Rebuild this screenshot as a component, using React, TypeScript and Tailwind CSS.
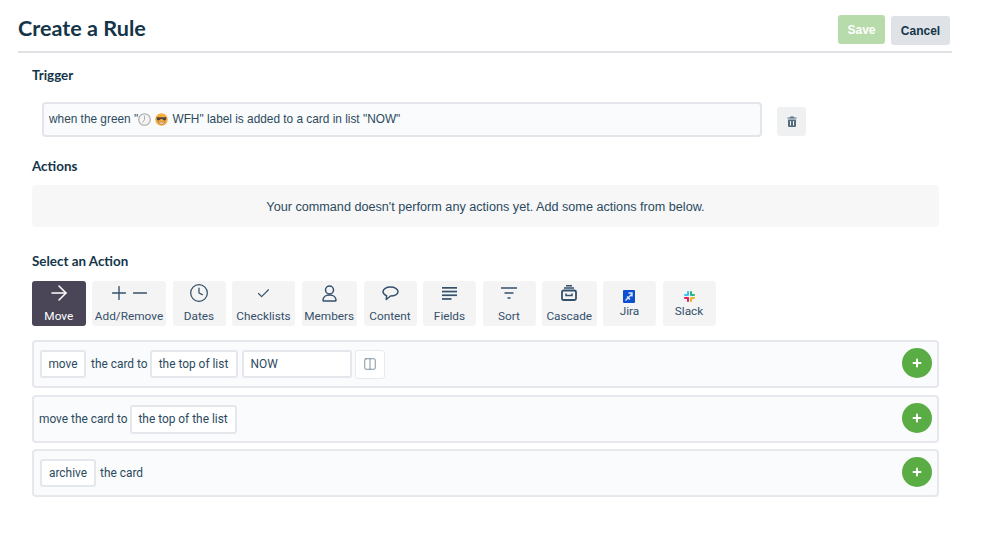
import React from "react";
import { ArrowRight, Plus, Minus, Clock, Check, Columns2 } from "lucide-react";

const ink = "#34506a";

function ClockEmoji() {
  return (
    <svg width="13" height="13" viewBox="0 0 28 28" className="inline-block align-[-2.500px]">
      <circle cx="14" cy="14" r="12.500" fill="#f4f4f4" stroke="#a8a8a8" strokeWidth="2.400" />
      <path d="M14 6.500V14l-3.500 6" fill="none" stroke="#8a8a8a" strokeWidth="1.400" strokeLinecap="round" />
    </svg>
  );
}

function CoolEmoji() {
  return (
    <svg width="13" height="13" viewBox="0 0 26 26" className="inline-block align-[-2px] ml-[4px] mr-[1px]">
      <circle cx="13" cy="13" r="12.500" fill="#f8ad3f" />
      <path d="M3 8.500h20l-.8 4.500c-.4 2-3.600 2.400-5.400 1.200-1.400-.9-2-2-3.800-2s-2.400 1.100-3.800 2c-1.800 1.200-5 .8-5.400-1.200z" fill="#4c4640" />
      <path d="M6.500 17.500c3.500 1.200 9.500 1.200 13 0-.8 3-3.400 4.800-6.500 4.800s-5.700-1.800-6.500-4.800z" fill="#fff4dc" stroke="#7a3b17" strokeWidth="1" />
    </svg>
  );
}

function TabButton({ label, width, active, children, tight }: { label: string; width: string; active?: boolean; children: React.ReactNode; tight?: boolean }) {
  return (
    <div className={`${width} h-[45px] rounded-[3px] flex flex-col items-center font-['Roboto',sans-serif] ${active ? "bg-[#4a4658] text-white" : "bg-[#f4f4f5] text-[#34506a]"} ${tight ? "pt-[5px]" : "pt-[2px]"}`}>
      <div className="h-[20px] flex items-center justify-center">{children}</div>
      <div className={`text-[11.800px] leading-[16px] whitespace-nowrap ${tight ? "-mt-[3px]" : "mt-[5px]"}`}>{label}</div>
    </div>
  );
}

function Pill({ children, className = "" }: { children: React.ReactNode; className?: string }) {
  return (
    <span className={`inline-flex items-center h-[28px] px-[7px] pt-[1px] bg-white border-2 border-[#e4e7ec] rounded-[3px] whitespace-nowrap ${className}`}>
      {children}
    </span>
  );
}

function AddButton() {
  return (
    <div className="w-[30px] h-[30px] -mt-[3px] rounded-full bg-[#5aac44] flex items-center justify-center">
      <Plus size={12} strokeWidth={4} color="#ffffff" />
    </div>
  );
}

function Row({ children }: { children: React.ReactNode }) {
  return (
    <div className="h-[48px] w-full bg-[#fafbfc] border-2 border-[#e6e8ee] rounded-[4px] flex items-center justify-between pl-[6px] pr-[5px] text-[11.900px] text-[#2c4a5e] font-['Roboto',sans-serif]">
      <div className="flex items-center">{children}</div>
      <AddButton />
    </div>
  );
}

export default function App() {
  return (
    <div className="w-[999px] h-[540px] bg-white overflow-hidden font-['Liberation_Sans',sans-serif]">
      <header className="ml-[18px] w-[934px] h-[53px] border-b-2 border-[#dfe1e4] flex justify-between pr-[2px]">
        <h1 className="mt-[14px] text-[21.600px] leading-[28px] font-bold text-[#143549] font-['Lato',sans-serif]">Create a Rule</h1>
        <div className="flex gap-[6px] items-start mt-[15px]">
          <button className="w-[47px] h-[29px] rounded-[3px] bg-[#b7dbab] text-white text-[12px] font-bold">Save</button>
          <button className="w-[59px] h-[29px] mt-[1px] rounded-[3px] bg-[#dfe3e8] text-[#143549] text-[12px] font-bold">Cancel</button>
        </div>
      </header>

      <main className="pl-[32px] w-[939px]">
        <h2 className="mt-[14px] text-[13.400px] leading-[17px] font-bold text-[#143549] font-['Lato',sans-serif]">Trigger</h2>
        <div className="mt-[18px] ml-[10px] flex items-center">
          <div className="w-[720px] h-[35px] bg-[#fafbfc] border-2 border-[#e3e5ea] rounded-[4px] flex items-center pl-[5px] text-[11.850px] text-[#2c4a5e] whitespace-pre">
            when the green "<ClockEmoji /><CoolEmoji /> WFH" label is added to a card in list "NOW"
          </div>
          <div className="ml-[15px] mt-[4px] w-[29px] h-[29px] rounded-[3px] bg-[#eff0f2] flex items-center justify-center">
            <svg width="10" height="11" viewBox="0 0 10 11">
              <path d="M3.500 0.500h3l.5 1h2.500v1h-9v-1h2.500z" fill="#546b7d" />
              <path d="M1 3.500h8v6.500a1 1 0 0 1-1 1h-6a1 1 0 0 1-1-1zM3 5v4.500h1V5zm3 0v4.500h1V5z" fill="#546b7d" fillRule="evenodd" />
            </svg>
          </div>
        </div>

        <h2 className="mt-[21px] text-[13.400px] leading-[17px] font-bold text-[#143549] font-['Lato',sans-serif]">Actions</h2>
        <div className="mt-[10px] h-[42px] bg-[#f7f7f8] rounded-[4px] flex items-center justify-center text-[12.650px] text-[#2c4a5e] pt-[2px]">
          Your command doesn't perform any actions yet. Add some actions from below.
        </div>

        <h2 className="mt-[26px] text-[13.400px] leading-[17px] font-bold text-[#143549] font-['Lato',sans-serif]">Select an Action</h2>
        <div className="mt-[11px] flex gap-[6.500px]">
          <TabButton label="Move" width="w-[53.500px]" active><ArrowRight size={24} strokeWidth={1.500} color="#ffffff" /></TabButton>
          <TabButton label="Add/Remove" width="w-[74px]">
            <span className="flex items-center -space-x-[1px]"><Plus size={22} strokeWidth={1.500} color={ink} /><Minus size={22} strokeWidth={1.500} color={ink} /></span>
          </TabButton>
          <TabButton label="Dates" width="w-[53px]"><Clock size={20} strokeWidth={1.500} color={ink} /></TabButton>
          <TabButton label="Checklists" width="w-[63px]"><Check size={15} strokeWidth={1.800} color={ink} /></TabButton>
          <TabButton label="Members" width="w-[55.500px]">
            <svg width="15" height="17" viewBox="0 0 15 17" fill="none" stroke={ink} strokeWidth="1.500">
              <circle cx="7.500" cy="5" r="4" />
              <path d="M1 15.200c0-3 2.500-5.200 6.500-5.200s6.500 2.200 6.500 5.200c0 .6-.4.9-1 .9h-11c-.6 0-1-.3-1-.9z" />
            </svg>
          </TabButton>
          <TabButton label="Content" width="w-[53px]">
            <svg width="17" height="15" viewBox="0 0 17 15" fill="none" stroke={ink} strokeWidth="1.500" strokeLinejoin="round">
              <path d="M8.500 1C4.400 1 1 2.900 1 5.600c0 1.900 1.500 3.300 3.500 4l-.2 3.900 4.200-3.500c4.100 0 7.500-1.700 7.500-4.400S12.600 1 8.500 1z" />
            </svg>
          </TabButton>
          <TabButton label="Fields" width="w-[53px]">
            <svg width="15" height="13" viewBox="0 0 15 13" fill={ink}>
              <rect y="0" width="15" height="1.700" />
              <rect y="3.700" width="15" height="1.700" />
              <rect y="7.400" width="15" height="1.700" />
              <rect y="11.100" width="9.500" height="1.700" />
            </svg>
          </TabButton>
          <TabButton label="Sort" width="w-[53px]">
            <svg width="16" height="12" viewBox="0 0 16 12"><path d="M0 1h16M3.500 6h9M6.500 11h3" stroke={ink} strokeWidth="1.700" /></svg>
          </TabButton>
          <TabButton label="Cascade" width="w-[54.500px]">
            <svg width="16" height="16" viewBox="0 0 16 16" fill="none" stroke={ink}>
              <path d="M5 .8h6M3 3h10" strokeWidth="1.500" />
              <rect x="1" y="5.500" width="14" height="9.500" rx="1.500" strokeWidth="1.800" />
              <path d="M5 8.500v2h6v-2" strokeWidth="1.500" />
            </svg>
          </TabButton>
          <TabButton label="Jira" width="w-[53px]" tight>
            <svg width="12" height="13" viewBox="0 0 12 13" className="-ml-[2px]">
              <rect width="12" height="13" rx="1" fill="#0d4fd1" />
              <path d="M2.500 10.500l6-6M5.500 3h3.500v3.500M4 6.500l3 3" stroke="#dce8ff" strokeWidth="1.400" fill="none" />
            </svg>
          </TabButton>
          <TabButton label="Slack" width="w-[53px]" tight>
            <svg width="11" height="11" viewBox="0 0 11 11" strokeWidth="2" strokeLinecap="round">
              <path d="M4 1v3" stroke="#36c5f0" />
              <path d="M1 4h2" stroke="#36c5f0" />
              <path d="M7 1v3" stroke="#2eb67d" />
              <path d="M8 4h2" stroke="#2eb67d" />
              <path d="M7 7v3" stroke="#ecb22e" />
              <path d="M8 7h2" stroke="#ecb22e" />
              <path d="M4 7v3" stroke="#e01e5a" />
              <path d="M1 7h2" stroke="#e01e5a" />
            </svg>
          </TabButton>
        </div>

        <div className="mt-[14px] flex flex-col">
          <Row>
            <Pill className="w-[46px] justify-center">move</Pill>
            <span className="ml-[5px] mr-[2px] pt-[2px]">the card to</span>
            <Pill className="w-[88px] justify-center">the top of list</Pill>
            <Pill className="ml-[4px] w-[110px]">NOW</Pill>
            <span className="ml-[3px] w-[30px] h-[29px] bg-white border border-[#e8eaee] rounded-[3px] flex items-center justify-center">
              <Columns2 size={14} strokeWidth={1.300} color="#5d7486" />
            </span>
          </Row>
          <div className="h-[7px]" />
          <Row>
            <span className="-ml-[1px] mr-[2px] pt-[2px]">move the card to</span>
            <Pill className="h-[29px] w-[107px] justify-center">the top of the list</Pill>
          </Row>
          <div className="h-[6px]" />
          <Row>
            <Pill className="w-[56px] justify-center">archive</Pill>
            <span className="ml-[4px] pt-[2px]">the card</span>
          </Row>
        </div>
      </main>
    </div>
  );
}
